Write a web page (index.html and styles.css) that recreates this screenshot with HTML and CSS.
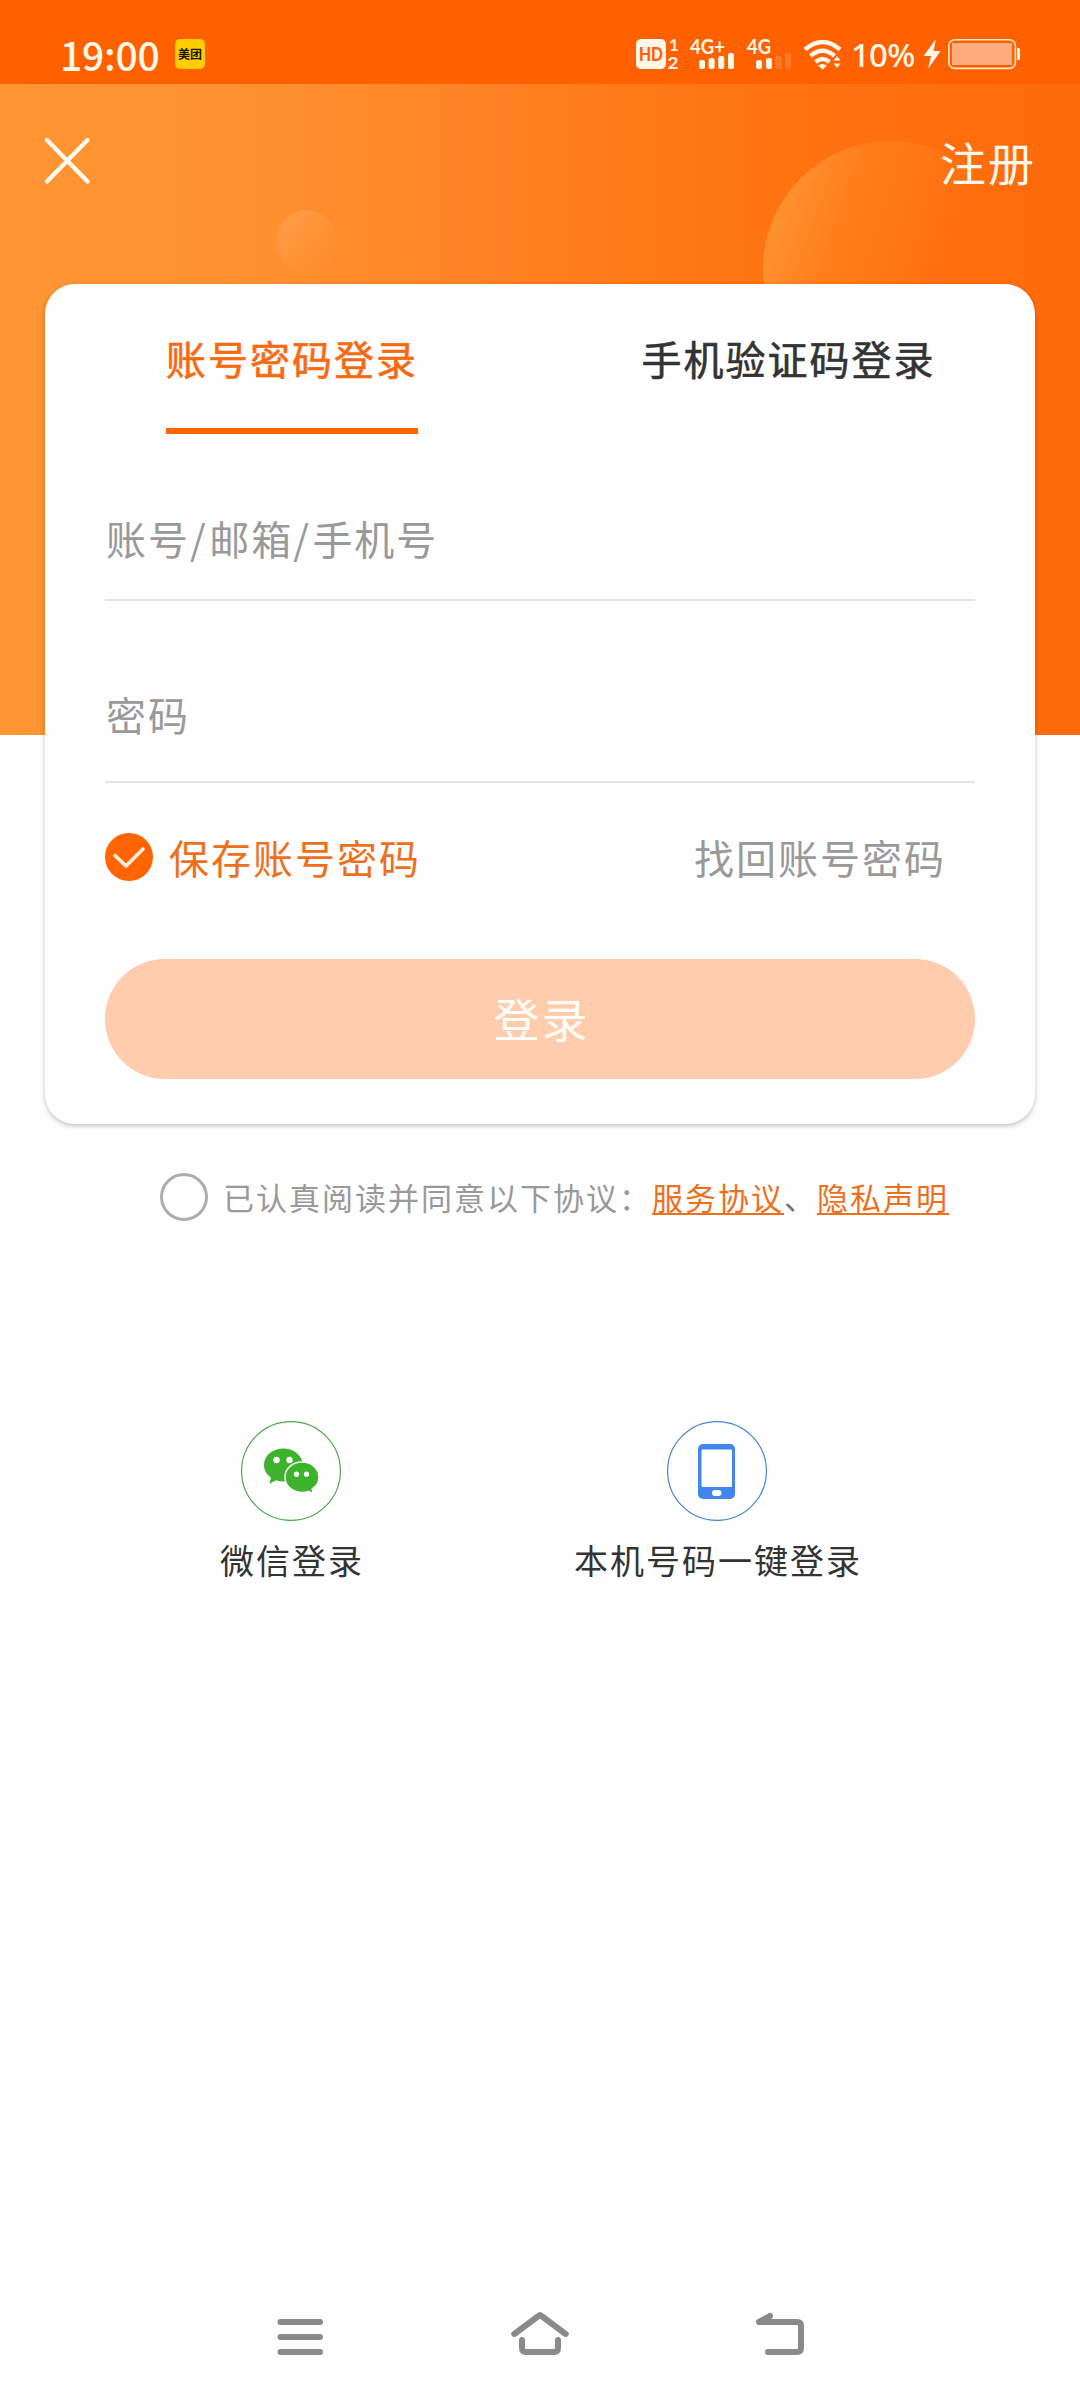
FILE: index.html
```html
<!DOCTYPE html>
<html lang="zh-CN">
<head>
<meta charset="utf-8">
<title>登录</title>
<link rel="stylesheet" href="styles.css">
</head>
<body>
<div class="screen">
  <div class="status-bar">
    <span class="clock">19:00</span>
    <span class="app-badge">美团</span>
    <svg class="status-icons" width="210" height="56" viewBox="635 26 210 56" fill="#fff8e8">
      <rect x="636" y="39" width="30" height="30" rx="5"/>
      <text class="hd" x="639" y="60.5" textLength="24" lengthAdjust="spacingAndGlyphs">HD</text>
      <text class="sim" x="669" y="51">1</text>
      <text class="sim" x="667.5" y="68.500" textLength="11" lengthAdjust="spacingAndGlyphs">2</text>
      <text class="net" x="690" y="54" textLength="35" lengthAdjust="spacingAndGlyphs">4G+</text>
      <rect x="699" y="60" width="6" height="9" rx="2"/>
      <rect x="708.6" y="58" width="6" height="11" rx="2"/>
      <rect x="718.2" y="56" width="6" height="13" rx="2"/>
      <rect x="728" y="53" width="6" height="16" rx="2"/>
      <text class="net" x="747" y="54" textLength="24" lengthAdjust="spacingAndGlyphs">4G</text>
      <rect x="756" y="60" width="6" height="9" rx="2"/>
      <rect x="766" y="58" width="6" height="11" rx="2"/>
      <g fill="#ff7a28"><rect x="775.5" y="56" width="6" height="13" rx="2"/><rect x="785" y="53" width="6" height="16" rx="2"/></g>
      <g fill="none" stroke="#fff8e8" stroke-width="4.400">
        <path d="M805 49.500Q822.500 34.500 840 49.500"/>
        <path d="M810.500 56Q822.500 45.500 834.500 56"/>
        <path d="M815.500 62Q822.500 56 829.500 62"/>
      </g>
      <path d="M818 65.500Q822.500 62.500 827 65.500L822.500 69.500Z"/>
      <path d="M833.500 60.500L837 56L840.500 60.500ZM833.500 63.500L837 68L840.500 63.500Z"/>
    </svg>
    <span class="percent">10%</span>
    <svg class="battery" width="98" height="32" viewBox="922 38 98 32">
      <path fill="#fff8e8" d="M936 39L923.500 56H931L928 69L940.500 51H933.500Z"/>
      <rect x="948.800" y="39.800" width="66.600" height="28.600" rx="6" fill="none" stroke="#ffe9c8" stroke-width="1.600"/>
      <rect x="952" y="43" width="60" height="22" fill="#ffab7b"/>
      <path fill="#fff8e8" d="M1017 48h1.500q1.500 0 1.500 1.500v9q0 1.500-1.500 1.500h-1.500z"/>
    </svg>
  </div>

  <div class="hero">
    <i class="bubble bubble-small"></i>
    <i class="bubble bubble-large"></i>
  </div>

  <div class="title-bar">
    <svg width="45" height="46" viewBox="0 0 45 46" fill="none" stroke="#fffaf0" stroke-width="4.400" stroke-linecap="round"><path d="M2 2L42.500 43.500M42.500 2L2 43.500"/></svg>
    <span class="register">注册</span>
  </div>

  <main class="card">
    <div class="tabs">
      <div class="tab"><span class="tab-label active">账号密码登录</span></div>
      <div class="tab"><span class="tab-label">手机验证码登录</span></div>
    </div>
    <div class="field account">账号<span class="slash">/</span>邮箱<span class="slash">/</span>手机号</div>
    <div class="field password">密码</div>
    <div class="options">
      <svg width="48" height="48" viewBox="0 0 48 48"><circle cx="24" cy="24" r="24" fill="#ff6503"/><path d="M10 22.500L21 33L38 16" fill="none" stroke="#fff1dc" stroke-width="3.600" stroke-linecap="round" stroke-linejoin="round"/></svg>
      <span class="remember">保存账号密码</span>
      <span class="recover">找回账号密码</span>
    </div>
    <div class="submit">登录</div>
  </main>

  <div class="agreement">
    <i class="radio"></i>
    <span>已认真阅读并同意以下协议：</span><a>服务协议</a><span class="sep">、</span><a>隐私声明</a>
  </div>

  <div class="social">
    <div class="social-item">
      <svg width="100" height="100" viewBox="241 1421 100 100">
        <circle cx="291" cy="1471" r="49.400" fill="none" stroke="#4fa851" stroke-width="1.200"/>
        <path fill="#3cb32b" d="M283.500 1448.500C272.500 1448.500 264 1455.500 264 1465C264 1470 266.500 1474.500 271 1477.500L269.500 1483.800L276 1480.300C279 1481.300 282 1481.700 285.500 1481.500L303 1463C301 1454.500 293 1448.500 283.500 1448.500Z"/>
        <path fill="#3cb32b" stroke="#fff" stroke-width="1.500" d="M302 1462C292.500 1462 285 1468.500 285 1477.200C285 1486 292.500 1492.500 302 1492.500C304.500 1492.500 306.500 1492.100 308.500 1491.400L313.500 1494L312.200 1489C316.500 1486.200 319 1482 319 1477.200C319 1468.500 311.500 1462 302 1462Z"/>
        <g fill="#fff"><circle cx="276.500" cy="1460" r="3.200"/><circle cx="289.500" cy="1460" r="3.200"/><circle cx="296.500" cy="1474.200" r="2.600"/><circle cx="306.500" cy="1474.200" r="2.600"/></g>
      </svg>
      <span class="social-label">微信登录</span>
    </div>
    <div class="social-item">
      <svg width="100" height="100" viewBox="0 0 100 100">
        <circle cx="50" cy="50" r="49.400" fill="none" stroke="#4a85dc" stroke-width="1.200"/>
        <rect x="31" y="23" width="37" height="55" rx="5" fill="#4285ec"/>
        <rect x="34.500" y="28.500" width="30.500" height="37.500" rx="1" fill="#fff"/>
        <rect x="45" y="69" width="9.500" height="6" rx="3" fill="#fff"/>
      </svg>
      <span class="social-label">本机号码一键登录</span>
    </div>
  </div>

  <div class="nav-bar">
    <svg width="60" height="50" viewBox="270 2312 60 50"><path d="M280.500 2322H320M280.500 2337H320M280.500 2352H320"/></svg>
    <svg width="60" height="50" viewBox="510 2312 60 50"><path d="M514.300 2334L538.500 2316Q540 2314.500 541.500 2316L565.700 2334M522 2340V2348Q522 2352 526 2352H554Q558 2352 558 2348V2340"/></svg>
    <svg width="60" height="50" viewBox="750 2312 60 50"><path d="M770 2316L759 2322H797Q801 2322 801 2326V2348Q801 2352 797 2352H768"/></svg>
  </div>
</div>
</body>
</html>
```
FILE: styles.css
```css
* { box-sizing: border-box; }

body {
  margin: 0;
  background: #fefefe;
  font-family: "Noto Sans CJK SC", sans-serif;
  color: #333;
}

svg { display: block; flex: none; }

.screen {
  position: relative;
  display: flex;
  flex-direction: column;
  width: 1080px;
  height: 2400px;
  overflow: hidden;
}

.status-bar {
  display: flex;
  align-items: center;
  height: 84px;
  padding: 24px 60px 0 60px;
  background: #ff6000;
  color: #fff8e8;
}

.clock {
  width: 115px;
  font: 500 39px/40px "Noto Sans CJK SC", sans-serif;
  letter-spacing: -0.2px;
}

.app-badge {
  width: 30px;
  height: 30px;
  border-radius: 5px;
  background: #ffcd00;
  color: #1d1600;
  font-size: 12px;
  font-weight: 700;
  line-height: 29px;
  text-align: center;
}

.status-icons { margin-left: 430px; }
.status-icons text { font-family: Lato, sans-serif; font-weight: 700; }
.status-icons .hd { font-size: 18px; font-weight: 900; fill: #ff6000; }
.status-icons .sim { font-size: 17px; }
.status-icons .net { font-size: 20px; }

.percent {
  width: 71px;
  margin-left: 6px;
  font: 500 33px/33px "Noto Sans", sans-serif;
  letter-spacing: -0.8px;
  white-space: nowrap;
}

.hero {
  position: absolute;
  top: 84px;
  left: 0;
  z-index: -1;
  width: 1080px;
  height: 651px;
  background: linear-gradient(90deg, #ff9533 0%, #ff9030 25%, #ff7d1d 52%, #ff7412 70%, #ff6a0b 100%);
}

.bubble { position: absolute; border-radius: 50%; }

.bubble-small {
  left: 277px;
  top: 126px;
  width: 60px;
  height: 64px;
  background: linear-gradient(135deg, rgba(255, 160, 80, .8) 10%, rgba(255, 148, 55, .7) 55%, rgba(255, 140, 42, .2) 90%);
}

.bubble-large {
  left: 763px;
  top: 57px;
  width: 256px;
  height: 256px;
  background: linear-gradient(110deg, rgba(255, 150, 52, .95) 8%, rgba(255, 132, 34, .6) 32%, rgba(255, 110, 12, 0) 68%);
}

.title-bar {
  display: flex;
  justify-content: space-between;
  align-items: center;
  height: 200px;
  padding: 0 44px 46px 45px;
}

.register {
  color: #fffaf0;
  font-size: 46px;
  line-height: 60px;
  letter-spacing: 2px;
}

.card {
  margin: 0 45px;
  height: 840px;
  padding: 0 60px 45px;
  border-radius: 30px;
  background: #fefefe;
  box-shadow: 0 2px 5px rgba(0, 0, 0, .24);
  font-size: 40px;
  line-height: 60px;
  letter-spacing: 2px;
}

.tabs { display: flex; margin: 0 -60px; }
.tab { flex: 1; display: flex; justify-content: center; }

.tab-label {
  padding: 44px 0 40px 1px;
  border-bottom: 6px solid transparent;
  margin-right: -1px;
  -webkit-text-stroke: 0.6px currentColor;
}

.tab-label.active { color: #f86a12; border-color: #ff6503; margin-right: 1px; padding-left: 0; }

.field {
  padding-left: 1px;
  border-bottom: 2px solid #e5e5e5;
  color: #999;
}

.account { padding-top: 74px; padding-bottom: 31px; }
.password { padding-top: 83px; padding-bottom: 37px; }
.slash { letter-spacing: 3.5px; }

.options { display: flex; align-items: center; margin-top: 44px; }
.remember { margin-left: 16px; color: #ee701c; }
.recover { margin-left: auto; margin-right: 29px; color: #999; }

.submit {
  height: 120px;
  margin-top: 72px;
  padding: 0 0 3px 3px;
  border-radius: 60px;
  background: #ffccae;
  color: #fffdf6;
  font-size: 46px;
  line-height: 117px;
  text-align: center;
}

.agreement {
  display: flex;
  align-items: center;
  height: 48px;
  margin: 49px 0 0 160px;
  color: #999;
  font-size: 31px;
  line-height: 48px;
  letter-spacing: 2px;
  white-space: nowrap;
}

.radio {
  width: 48px;
  height: 48px;
  margin-right: 15px;
  border: 3px solid #adadad;
  border-radius: 50%;
}

.agreement a {
  color: #ee701c;
  text-decoration: underline;
  text-decoration-thickness: 2px;
  text-underline-offset: 3px;
  text-decoration-skip-ink: none;
}

.sep { color: #777; }

.social { display: flex; margin: 200px 0 0 78px; }

.social-item {
  display: flex;
  flex-direction: column;
  align-items: center;
  gap: 14px;
  width: 426px;
  font-size: 34px;
  line-height: 50px;
  letter-spacing: 2px;
}

.social-label { padding-left: 2px; }

.nav-bar {
  display: flex;
  justify-content: center;
  gap: 180px;
  height: 88px;
  margin-top: auto;
}

.nav-bar path {
  fill: none;
  stroke: #8a8a8a;
  stroke-width: 6px;
  stroke-linecap: round;
  stroke-linejoin: round;
}
```
